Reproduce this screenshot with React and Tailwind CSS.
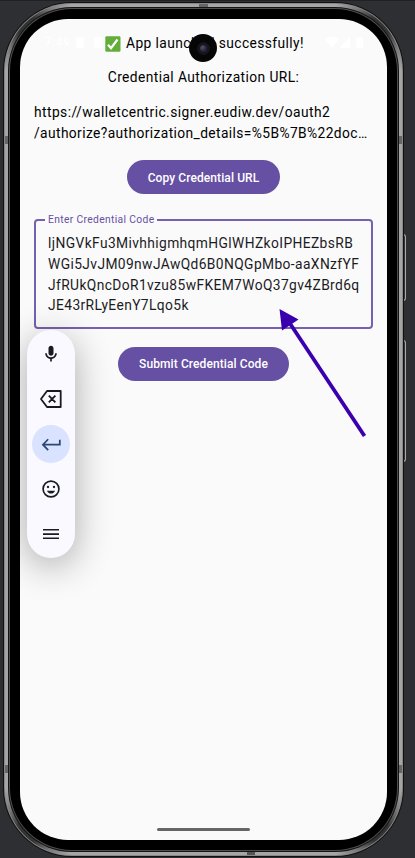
const iconProps = { width: 21, height: 21, viewBox: "0 0 24 24", fill: "currentColor", className: "block shrink-0" };

function Toolbar() {
  return (
    <div className="absolute left-[7px] top-[311px] flex h-[228px] w-12 flex-col items-center justify-between rounded-full bg-[#f9f9ff] py-[5px] text-[#1a1b20] shadow-[0_8px_36px_rgba(0,0,0,0.32)]">
      <div className="flex h-[38px] w-[38px] items-center justify-center">
        <svg {...iconProps} width="20" height="20"><path d="M12 14c1.66 0 3-1.34 3-3V5c0-1.66-1.34-3-3-3S9 3.34 9 5v6c0 1.66 1.34 3 3 3zm5-3c0 2.76-2.24 5-5 5s-5-2.24-5-5H5c0 3.53 2.61 6.43 6 6.92V21h2v-3.08c3.39-.49 6-3.39 6-6.92h-2z" /></svg>
      </div>
      <div className="flex h-[38px] w-[38px] items-center justify-center">
        <svg {...iconProps} width="24" height="22" viewBox="0 0 24 22" fill="none" stroke="currentColor" strokeWidth="1.8"><path d="M8 3H21.7V19H8L2 11ZM9.8 7.7l6.6 6.6m0-6.6l-6.6 6.6" strokeLinejoin="round" /></svg>
      </div>
      <div className="flex h-[38px] w-[38px] items-center justify-center rounded-full bg-[#d9e2ff] text-[#2c4678]">
        <svg {...iconProps} fill="none" stroke="currentColor" strokeWidth="2"><path d="M21.5 6.5v5.7H2.5M8.2 6l-6 6.2 6 6.2" /></svg>
      </div>
      <div className="flex h-[38px] w-[38px] items-center justify-center">
        <svg {...iconProps} width="20" height="20"><circle cx="12" cy="12" r="9.5" fill="none" stroke="currentColor" strokeWidth="2" /><circle cx="8.4" cy="9.6" r="1.4" /><circle cx="15.6" cy="9.6" r="1.4" /><path d="M7.2 14h9.6a5.1 5.1 0 0 1-9.6 0z" /></svg>
      </div>
      <div className="flex h-[38px] w-[38px] items-center justify-center">
        <svg {...iconProps} width="16" height="12" viewBox="0 0 16 12"><path d="M0 1h16v1.5H0zM0 5.2h16v1.7H0zM0 9.5h16V11H0z" /></svg>
      </div>
    </div>
  );
}

function StatusBar() {
  return (
    <div className="absolute left-[25px] right-[22px] top-[14px] flex h-[18px] items-center justify-between text-[12px] font-medium text-white">
      <div className="flex items-center gap-[6px]">
        <span>7:49</span>
        <span className="h-[11px] w-2 rounded-[1px] bg-white" />
        <span className="ml-1 h-[11px] w-2 rounded-[2px] bg-white" />
      </div>
      <svg width="40" height="12" viewBox="0 0 40 12" fill="white"><path d="M0 3q7-5 14 0L7 12zM14 12L25 1v11zM31 2h2V1h3v1h2v10h-7z" /></svg>
    </div>
  );
}

function Camera() {
  return (
    <div className="absolute left-[169px] top-[15px] flex h-7 w-7 items-center justify-center rounded-full bg-[#060606]">
      <div className="flex h-[13px] w-[13px] items-center justify-center rounded-full bg-[#15151c]">
        <div className="h-[7px] w-[7px] rounded-full bg-[radial-gradient(circle_at_35%_35%,#55526e,#252338_60%)]" />
      </div>
    </div>
  );
}

function Arrow() {
  return (
    <svg className="absolute left-[255px] top-[286px]" width="96" height="136" viewBox="275 305 96 136">
      <path d="M289 322L364.5 436" stroke="#3a00b0" strokeWidth="3.8" />
      <path d="M279.5 309L298.5 319.5L282 330.5Z" fill="#3a00b0" />
    </svg>
  );
}

function Screen() {
  return (
    <main className="relative flex h-[821px] w-[367px] flex-col items-center overflow-hidden rounded-[48px] bg-[#fafafa] px-[14px] pt-[14px] text-[13.8px] leading-[20.67px] tracking-[0.41px] text-black">
      <StatusBar />
      <div className="relative ml-[2px] flex h-[21px] items-center whitespace-nowrap tracking-[0.41px]">
        <svg className="mr-[5px]" width="16" height="16" viewBox="0 0 16 16"><rect x=".3" y=".3" width="15.2" height="15.4" rx="1.2" fill="#62ae38" /><path d="M3 8.7l3 3.5L12.5 3.5" fill="none" stroke="white" strokeWidth="2.2" /></svg>
        <span>App launched successfully!</span>
      </div>
      <p className="mt-[13px] h-[21px] whitespace-nowrap">Credential Authorization URL:</p>
      <div className="mt-[14px] h-[41px] w-full whitespace-nowrap">
        <p className="tracking-[0.43px]">https://walletcentric.signer.eudiw.dev/oauth2</p>
        <p className="tracking-[0.39px]">/authorize?authorization_details=%5B%7B%22doc…</p>
      </div>
      <button className="mt-[17px] h-[34px] w-[153px] shrink-0 whitespace-nowrap rounded-full bg-[#6650a4] pt-[2px] text-[12px] font-medium tracking-[0.09px] text-white">Copy Credential URL</button>
      <fieldset className="mt-[19px] h-[116px] w-full shrink-0 rounded-[4px] border-2 border-[#6650a4]/90 pl-3 text-[#1c1b1f]">
        <legend className="-ml-[3px] px-[3px] text-[10.3px] leading-[14px] tracking-[0.34px] text-[#6650a4]">Enter Credential Code</legend>
        <div className="mt-[6.3px] whitespace-nowrap tracking-[0.39px]">
          <p>ljNGVkFu3MivhhigmhqmHGlWHZkoIPHEZbsRB</p>
          <p>WGi5JvJM09nwJAwQd6B0NQGpMbo-aaXNzfYF</p>
          <p>JfRUkQncDoR1vzu85wFKEM7WoQ37gv4ZBrd6q</p>
          <p>JE43rRLyEenY7Lqo5k</p>
        </div>
      </fieldset>
      <Toolbar />
      <button className="relative mt-[18px] h-[34px] w-[171px] shrink-0 whitespace-nowrap rounded-full bg-[#6650a4] pt-px text-[12px] font-medium tracking-[0.09px] text-white">Submit Credential Code</button>
      <div className="mb-[9px] mt-auto h-[3px] w-[93px] shrink-0 rounded-full bg-[#666]" />
      <Camera />
      <Arrow />
    </main>
  );
}

export default function App() {
  return (
    <div className="relative h-[858px] w-[415px] overflow-hidden border-t border-[#202125] bg-[#2e2f33] pl-[3px] pt-[1px] font-[Roboto,sans-serif]">
      <span className="absolute left-[403px] top-[233px] h-[67px] w-[3px] rounded-r-sm border border-[#aaa] bg-[#333]" />
      <span className="absolute left-[403px] top-[339px] h-[122px] w-[3px] rounded-r-sm border border-[#aaa] bg-[#333]" />
      <div className="relative h-[855px] w-[401px] rounded-[69px] bg-[#111] p-px">
        <div className="h-full w-full rounded-[68px] bg-[#888] p-px">
          <div className="relative h-full w-full rounded-[67px] bg-[#a5a5a5] bg-[radial-gradient(circle_at_22px_22px,#333_10px,#777_28px,transparent_48px),radial-gradient(circle_at_375px_22px,#333_10px,#777_28px,transparent_48px),radial-gradient(circle_at_22px_829px,#333_10px,#777_28px,transparent_48px),radial-gradient(circle_at_375px_829px,#333_10px,#777_28px,transparent_48px)] p-[3px]">
            <span className="absolute left-[194px] top-0 h-[4px] w-[9px] bg-[#666]" />
            <span className="absolute bottom-0 left-[242px] h-[4px] w-[8px] bg-[#555]" />
            <span className="absolute left-0 top-[132px] h-[8px] w-[4px] bg-[#666]" />
            <span className="absolute right-0 top-[132px] h-[8px] w-[4px] bg-[#666]" />
            <span className="absolute left-0 top-[761px] h-[8px] w-[4px] bg-[#666]" />
            <span className="absolute right-0 top-[761px] h-[8px] w-[4px] bg-[#666]" />
            <div className="relative h-full w-full rounded-[64px] bg-[#151515] p-px">
              <div className="h-full w-full rounded-[63px] bg-[#4d4d4d] p-px">
                <div className="h-full w-full rounded-[62px] bg-black pl-[10px] pt-[10px]">
                  <Screen />
                </div>
              </div>
            </div>
          </div>
        </div>
      </div>
    </div>
  );
}
